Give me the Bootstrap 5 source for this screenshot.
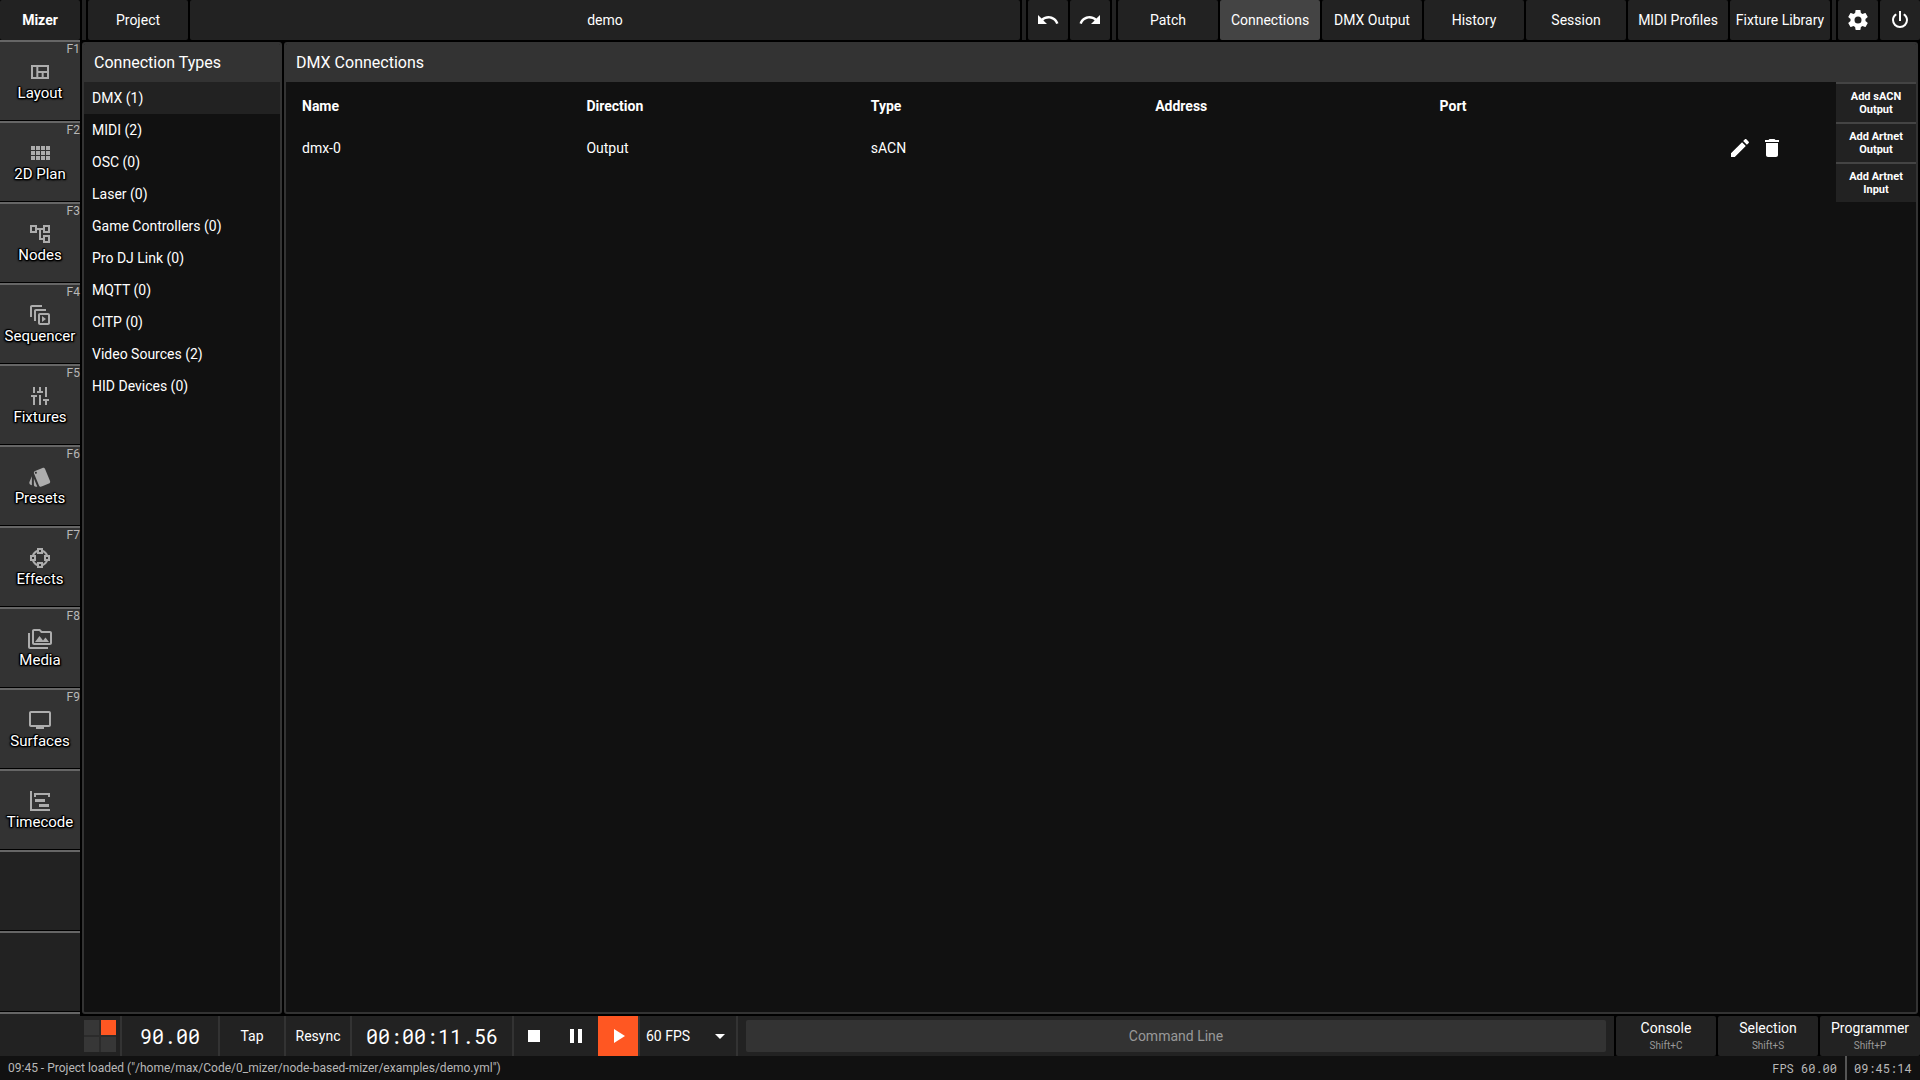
<!DOCTYPE html>
<html lang="en">
<head>
<meta charset="utf-8">
<meta name="viewport" content="width=device-width, initial-scale=1">
<title>Mizer</title>
<link href="https://cdn.jsdelivr.net/npm/bootstrap@5.3.0/dist/css/bootstrap.min.css" rel="stylesheet">
<style>
:root{--mz-bg:#111;--mz-bar:#222;--mz-panel:#333;--mz-accent:#ff5722}
body{font-family:Roboto,sans-serif;font-size:14px;line-height:20px;background:#000;color:#fff;width:1920px;height:1080px}
svg{width:24px;height:24px;fill:currentColor;flex:none;display:block}
.btn{--bs-btn-padding-x:0;--bs-btn-padding-y:0;--bs-btn-font-size:14px;--bs-btn-line-height:20px;--bs-btn-color:#fff;--bs-btn-bg:var(--mz-bar);--bs-btn-hover-color:#fff;--bs-btn-hover-bg:#444;--bs-btn-active-bg:#444;--bs-btn-active-color:#fff;--bs-btn-border-radius:2px;border:0;display:flex;align-items:center;justify-content:center;white-space:nowrap}
.mono{font-family:"Roboto Mono","Noto Sans Mono","DejaVu Sans Mono",monospace}
.top-bar{height:40px;gap:2px}
.top-bar .btn,.top-bar .title-box{height:40px;background:var(--mz-bar);border-radius:2px}
.w-tab{width:100px}.w-brand{width:80px}.w-icon{width:40px}
.top-bar .btn.active{background:#444}
.sep{width:4px;background:var(--mz-bar)}
.side-nav{width:80px;background:var(--mz-bar)}
.nav-tile{--bs-btn-border-radius:0;width:80px;height:81px;border-top:2px solid #666;border-bottom:1px solid #000;background:var(--mz-panel);flex-direction:column;position:relative;font-size:15px;line-height:18px;color:#fff}
.nav-tile svg{color:#adadad}
.nav-tile .tile-name{text-shadow:1px 0 1px #000,-1px 0 1px #000,0 1px 1px #000,0 -1px 1px #000,1px 1px 1px #000,-1px -1px 1px #000,1px 1px 2px #000,-1px 1px 2px #000}
.nav-tile .hotkey{position:absolute;top:0;right:0;font-size:12px;line-height:14px;color:#b8b8b8}
.nav-tile.vacant{background:var(--mz-bar)}
.nav-end{height:4px;border-top:2px solid #666}
.workspace{padding:2px;gap:2px}
.panel{border:2px solid var(--mz-panel);border-radius:3px;background:var(--mz-bg);overflow:hidden}
.panel-title{height:38px;padding:9px 10px 0;background:var(--mz-panel);font-size:16px;line-height:19px}
.types-panel{width:200px}
.types-panel .list-group-item{height:32px;padding:6px 8px;border:0;border-radius:0;background:transparent;color:#fff}
.types-panel .list-group-item.active{background:var(--mz-bar)}
.conn-table{padding-left:16px}
.conn-row{display:grid;grid-template-columns:repeat(5,284.4px) 1fr;align-items:center}
.conn-row.head-row{height:48px;font-weight:700}
.conn-row.data-row{height:36px}
.act-btn{width:32px;height:32px;background:transparent}
.action-col{width:80px}
.action-col .btn{--bs-btn-border-radius:0;height:40px;border-top:2px solid #444;font-size:11px;line-height:13px;font-weight:700;white-space:normal;padding:0 12px}
.transport{height:40px;background:var(--mz-bar)}
.beats{width:120px;padding:4px 4px 4px 84px}
.beat-grid{display:grid;grid-template-columns:15px 15px;grid-template-rows:15px 15px;gap:2px;background:#2b2b2b;width:32px;height:32px}
.beat-grid i{background:#373737}
.beat-grid i.lit{background:var(--mz-accent)}
.cell{border-left:2px solid #333;height:40px;display:flex;align-items:center;justify-content:center}
.big-mono{font-size:20px;line-height:24px}
.transport .btn{height:40px;border-radius:0}
.transport .btn.playing{background:var(--mz-accent)}
.cmd-wrap{padding:4px 8px}
.cmd-wrap .form-control{height:32px;padding:0;border:0;border-radius:2px;background:#333;color:#fff;text-align:center;font-size:14px}
.cmd-wrap .form-control::placeholder{color:#999;opacity:1}
.panel-btns{background:#000;gap:2px;padding-left:2px}
.transport .panel-btns .btn{width:100px;flex-direction:column;line-height:16px;border-radius:2px}
.panel-btns .keys{font-size:10px;line-height:12px;color:#999;margin-top:4px}
.status{height:24px;background:var(--mz-bg);color:#b8b8b8;font-size:12px;line-height:24px;padding-left:8px}
.status .mono{font-size:12px}
.clock{border-left:2px solid #555;padding:0 8px 0 7px;width:75px}
</style>
</head>
<body class="d-flex flex-column overflow-hidden">
<header class="top-bar d-flex">
  <button class="btn w-brand fw-bold">Mizer</button>
  <span class="sep"></span>
  <button class="btn w-tab">Project</button>
  <div class="title-box flex-grow-1 d-flex align-items-center justify-content-center">demo</div>
  <span class="sep"></span>
  <button class="btn w-icon" aria-label="Undo"><svg viewBox="0 0 24 24"><path d="M12.5 8c-2.65 0-5.05.99-6.9 2.6L2 7v9h9l-3.62-3.62c1.39-1.16 3.16-1.88 5.12-1.88 3.54 0 6.55 2.31 7.6 5.5l2.37-.78C21.08 11.03 17.15 8 12.5 8z"/></svg></button>
  <button class="btn w-icon" aria-label="Redo"><svg viewBox="0 0 24 24"><path d="M18.4 10.6C16.55 8.99 14.15 8 11.5 8c-4.65 0-8.58 3.03-9.96 7.22L3.9 16c1.05-3.19 4.05-5.5 7.6-5.5 1.95 0 3.73.72 5.12 1.88L13 16h9V7l-3.6 3.6z"/></svg></button>
  <span class="sep"></span>
  <button class="btn w-tab">Patch</button>
  <button class="btn w-tab active">Connections</button>
  <button class="btn w-tab">DMX Output</button>
  <button class="btn w-tab">History</button>
  <button class="btn w-tab">Session</button>
  <button class="btn w-tab">MIDI Profiles</button>
  <button class="btn w-tab">Fixture Library</button>
  <span class="sep"></span>
  <button class="btn w-icon" aria-label="Settings"><svg viewBox="0 0 24 24"><path d="M12,15.5A3.5,3.5 0 0,1 8.5,12A3.5,3.5 0 0,1 12,8.5A3.5,3.5 0 0,1 15.5,12A3.5,3.5 0 0,1 12,15.5M19.43,12.97C19.47,12.65 19.5,12.33 19.5,12C19.5,11.67 19.47,11.34 19.43,11L21.54,9.37C21.73,9.22 21.78,8.95 21.66,8.73L19.66,5.27C19.54,5.05 19.27,4.96 19.05,5.05L16.56,6.05C16.04,5.66 15.5,5.32 14.87,5.07L14.5,2.42C14.46,2.18 14.25,2 14,2H10C9.75,2 9.54,2.18 9.5,2.42L9.13,5.07C8.5,5.32 7.96,5.66 7.44,6.05L4.95,5.05C4.73,4.96 4.46,5.05 4.34,5.27L2.34,8.73C2.21,8.95 2.27,9.22 2.46,9.37L4.57,11C4.53,11.34 4.5,11.67 4.5,12C4.5,12.33 4.53,12.65 4.57,12.97L2.46,14.63C2.27,14.78 2.21,15.05 2.34,15.27L4.34,18.73C4.46,18.95 4.73,19.03 4.95,18.95L7.44,17.94C7.96,18.34 8.5,18.68 9.13,18.93L9.5,21.58C9.54,21.82 9.75,22 10,22H14C14.25,22 14.46,21.82 14.5,21.58L14.87,18.93C15.5,18.67 16.04,18.34 16.56,17.94L19.05,18.95C19.27,19.03 19.54,18.95 19.66,18.73L21.66,15.27C21.78,15.05 21.73,14.78 21.54,14.63L19.43,12.97Z"/></svg></button>
  <button class="btn w-icon" aria-label="Quit"><svg viewBox="0 0 24 24"><path d="M16.56,5.44L15.11,6.89C16.84,7.94 18,9.83 18,12A6,6 0 0,1 12,18A6,6 0 0,1 6,12C6,9.83 7.16,7.94 8.88,6.88L7.44,5.44C5.36,6.88 4,9.28 4,12A8,8 0 0,0 12,20A8,8 0 0,0 20,12C20,9.28 18.64,6.88 16.56,5.44M13,3H11V13H13"/></svg></button>
</header>

<div class="d-flex flex-grow-1">
  <nav class="side-nav d-flex flex-column">
    <a class="btn nav-tile"><span class="hotkey">F1</span><svg viewBox="0 0 24 24"><path fill-rule="evenodd" d="M3 5h18v14H3zM5 7v10h3.33V7zM10.33 7v4H19V7zM10.33 13v4h3.34v-4zM15.67 13v4H19v-4z"/></svg><span class="tile-name">Layout</span></a>
    <a class="btn nav-tile"><span class="hotkey">F2</span><svg viewBox="0 0 24 24"><path d="M3 9h4V5H3v4zm0 5h4v-4H3v4zm5 0h4v-4H8v4zm5 0h4v-4h-4v4zM8 9h4V5H8v4zm5-4v4h4V5h-4zm5 9h4v-4h-4v4zM3 19h4v-4H3v4zm5 0h4v-4H8v4zm5 0h4v-4h-4v4zm5 0h4v-4h-4v4zm0-14v4h4V5h-4z"/></svg><span class="tile-name">2D Plan</span></a>
    <a class="btn nav-tile"><span class="hotkey">F3</span><svg viewBox="0 0 24 24"><path d="M22 11V3h-7v3H9V3H2v8h7V8h2v10h4v3h7v-8h-7v3h-2V8h2v3h7zM7 9H4V5h3v4zm10 6h3v4h-3v-4zm0-10h3v4h-3V5z"/></svg><span class="tile-name">Nodes</span></a>
    <a class="btn nav-tile"><span class="hotkey">F4</span><svg viewBox="0 0 24 24"><path d="M14 2H4c-1.11 0-2 .9-2 2v10h2V4h10V2zm4 4H8c-1.11 0-2 .9-2 2v10h2V8h10V6zm2 4h-8c-1.11 0-2 .9-2 2v8c0 1.1.89 2 2 2h8c1.1 0 2-.9 2-2v-8c0-1.1-.9-2-2-2zm0 10h-8v-8h8v8zM14 13v6l4-3z"/></svg><span class="tile-name">Sequencer</span></a>
    <a class="btn nav-tile"><span class="hotkey">F5</span><svg viewBox="0 0 24 24"><path transform="rotate(90 12 12)" d="M3 17v2h6v-2H3zM3 5v2h10V5H3zm10 16v-2h8v-2h-8v-2h-2v6h2zM7 9v2H3v2h4v2h2V9H7zm14 4v-2H11v2h10zm-6-4h2V7h4V5h-4V3h-2v6z"/></svg><span class="tile-name">Fixtures</span></a>
    <a class="btn nav-tile"><span class="hotkey">F6</span><svg viewBox="0 0 24 24"><path d="M2.53 19.65l1.34.56v-9.03l-2.43 5.86c-.41 1.02.08 2.19 1.09 2.61zm19.5-3.7L17.07 3.98c-.31-.75-1.04-1.21-1.81-1.23-.26 0-.53.04-.79.15L7.1 5.95c-.75.31-1.21 1.03-1.23 1.8-.01.27.04.54.15.8l4.96 11.97c.31.76 1.05 1.22 1.83 1.23.26 0 .52-.05.77-.15l7.36-3.05c1.02-.42 1.51-1.59 1.09-2.6zM7.88 8.75c-.55 0-1-.45-1-1s.45-1 1-1 1 .45 1 1-.45 1-1 1zm-2 11c0 1.1.9 2 2 2h1.45l-3.45-8.34v6.34z"/></svg><span class="tile-name">Presets</span></a>
    <a class="btn nav-tile"><span class="hotkey">F7</span><svg viewBox="0 0 24 24"><path fill-rule="evenodd" d="M9,2V4.06C6.72,4.92 4.92,6.72 4.05,9H2V15H4.06C4.92,17.28 6.72,19.09 9,19.95V22H15V19.94C17.28,19.08 19.09,17.28 19.95,15H22V9H19.94C19.08,6.72 17.28,4.92 15,4.05V2M11,4H13V6H11M9,6.25V8H15V6.25C16.18,6.86 17.14,7.82 17.75,9H16V15H17.75C17.14,16.18 16.18,17.14 15,17.75V16H9V17.75C7.82,17.14 6.86,16.18 6.25,15H8V9H6.25C6.86,7.82 7.82,6.86 9,6.25M4,11H6V13H4M18,11H20V13H18M11,18H13V20H11"/></svg><span class="tile-name">Effects</span></a>
    <a class="btn nav-tile"><span class="hotkey">F8</span><svg viewBox="0 0 24 24"><path d="M2 6H0v5h.01L0 20c0 1.1.9 2 2 2h18v-2H2V6zm5 9h14l-3.5-4.5-2.5 3.01L11.5 9zM22 4h-8l-2-2H6c-1.1 0-1.99.9-1.99 2L4 16c0 1.1.9 2 2 2h16c1.1 0 2-.9 2-2V6c0-1.1-.9-2-2-2zm0 12H6V4h5.17l1.41 1.41.59.59H22v10z"/></svg><span class="tile-name">Media</span></a>
    <a class="btn nav-tile"><span class="hotkey">F9</span><svg viewBox="0 0 24 24"><path d="M21 3H3c-1.1 0-2 .9-2 2v12c0 1.1.9 2 2 2h5v2h8v-2h5c1.1 0 1.99-.9 1.99-2L23 5c0-1.1-.9-2-2-2zm0 14H3V5h18v12z"/></svg><span class="tile-name">Surfaces</span></a>
    <a class="btn nav-tile"><svg viewBox="0 0 24 24"><path d="M2,2H4V20H22V22H2V2M7,10H17V13H7V10M11,15H21V18H11V15M6,4H22V8H20V6H8V8H6V4Z"/></svg><span class="tile-name">Timecode</span></a>
    <div class="nav-tile vacant"></div>
    <div class="nav-tile vacant"></div>
    <div class="nav-end"></div>
  </nav>

  <main class="workspace d-flex flex-grow-1">
    <section class="panel types-panel d-flex flex-column">
      <div class="panel-title">Connection Types</div>
      <ul class="list-group">
        <li class="list-group-item active">DMX (1)</li>
        <li class="list-group-item">MIDI (2)</li>
        <li class="list-group-item">OSC (0)</li>
        <li class="list-group-item">Laser (0)</li>
        <li class="list-group-item">Game Controllers (0)</li>
        <li class="list-group-item">Pro DJ Link (0)</li>
        <li class="list-group-item">MQTT (0)</li>
        <li class="list-group-item">CITP (0)</li>
        <li class="list-group-item">Video Sources (2)</li>
        <li class="list-group-item">HID Devices (0)</li>
      </ul>
    </section>
    <section class="panel flex-grow-1 d-flex flex-column">
      <div class="panel-title">DMX Connections</div>
      <div class="d-flex flex-grow-1">
        <div class="conn-table flex-grow-1">
          <div class="conn-row head-row"><span>Name</span><span>Direction</span><span>Type</span><span>Address</span><span>Port</span></div>
          <div class="conn-row data-row"><span>dmx-0</span><span>Output</span><span>sACN</span><span></span><span></span>
            <div class="d-flex">
              <button class="btn act-btn" aria-label="Edit"><svg viewBox="0 0 24 24"><path d="M3 17.25V21h3.75L17.81 9.94l-3.75-3.75L3 17.25zM20.71 7.04c.39-.39.39-1.02 0-1.41l-2.34-2.34c-.39-.39-1.02-.39-1.41 0l-1.83 1.83 3.75 3.75 1.83-1.83z"/></svg></button>
              <button class="btn act-btn" aria-label="Delete"><svg viewBox="0 0 24 24"><path d="M6 19c0 1.1.9 2 2 2h8c1.1 0 2-.9 2-2V7H6v12zM19 4h-3.5l-1-1h-5l-1 1H5v2h14V4z"/></svg></button>
            </div>
          </div>
        </div>
        <div class="action-col">
          <button class="btn w-100">Add sACN Output</button>
          <button class="btn w-100">Add Artnet Output</button>
          <button class="btn w-100">Add Artnet Input</button>
        </div>
      </div>
    </section>
  </main>
</div>

<div class="transport d-flex">
  <div class="beats"><div class="beat-grid"><i></i><i class="lit"></i><i></i><i></i></div></div>
  <div class="cell mono big-mono" style="width:98px">90.00</div>
  <div class="cell" style="width:66px">Tap</div>
  <div class="cell" style="width:66px">Resync</div>
  <div class="cell mono big-mono" style="width:162px">00:00:11.56</div>
  <div class="cell" style="gap:2px">
    <button class="btn w-icon" aria-label="Stop"><svg viewBox="0 0 24 24"><path d="M6 6h12v12H6z"/></svg></button>
    <button class="btn w-icon" aria-label="Pause"><svg viewBox="0 0 24 24"><path d="M6 19h4V5H6v14zm8-14v14h4V5h-4z"/></svg></button>
    <button class="btn w-icon playing" aria-label="Play"><svg viewBox="0 0 24 24"><path d="M8 5v14l11-7z"/></svg></button>
  </div>
  <div class="cell justify-content-between" style="width:98px;padding:0 4px 0 6px"><span>60 FPS</span><svg viewBox="0 0 24 24"><path d="M7 10l5 5 5-5z"/></svg></div>
  <div class="cell flex-grow-1"><div class="cmd-wrap w-100"><input class="form-control" placeholder="Command Line"></div></div>
  <div class="panel-btns d-flex">
    <button class="btn">Console<span class="keys">Shift+C</span></button>
    <button class="btn">Selection<span class="keys">Shift+S</span></button>
    <button class="btn">Programmer<span class="keys">Shift+P</span></button>
  </div>
</div>
<footer class="status d-flex">
  <span class="flex-grow-1">09:45 - Project loaded ("/home/max/Code/0_mizer/node-based-mizer/examples/demo.yml")</span>
  <span class="mono pe-2">FPS 60.00</span>
  <span class="mono clock">09:45:14</span>
</footer>
<script src="https://cdn.jsdelivr.net/npm/bootstrap@5.3.0/dist/js/bootstrap.bundle.min.js"></script>
</body>
</html>
